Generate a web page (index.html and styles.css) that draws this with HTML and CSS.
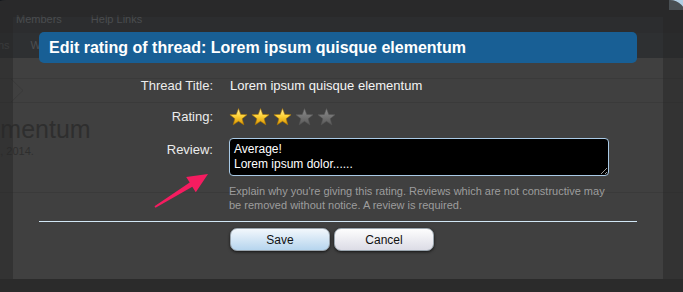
FILE: index.html
```html
<!DOCTYPE html>
<html lang="en">
<head>
    <meta charset="UTF-8">
    <meta name="viewport" content="width=device-width, initial-scale=1.0">
    <title>Edit rating of thread</title>
    <link rel="stylesheet" href="styles.css">
</head>
<body>

    <svg class="defs" width="0" height="0" aria-hidden="true">
        <defs>
            <linearGradient id="goldFill" x1="0" y1="0" x2="0" y2="1">
                <stop offset="0" stop-color="#fff4a8"/>
                <stop offset="0.45" stop-color="#ffd43a"/>
                <stop offset="1" stop-color="#d99400"/>
            </linearGradient>
            <linearGradient id="greyFill" x1="0" y1="0" x2="0" y2="1">
                <stop offset="0" stop-color="#8c8c8c"/>
                <stop offset="1" stop-color="#5a5a5a"/>
            </linearGradient>
            <symbol id="star" viewBox="0 0 20 20">
                <polygon points="10,0.6 12.35,6.76 19.04,7.06 13.8,11.24 15.58,17.69 10,14 4.42,17.69 6.2,11.24 0.96,7.06 7.65,6.76"/>
            </symbol>
        </defs>
    </svg>

    <!-- the forum page behind the dialog -->
    <div class="page">
        <header class="site-header">
            <nav class="tabs">
                <span>Members</span>
                <span>Help Links</span>
            </nav>
            <span class="header-cap"></span>
        </header>
        <div class="subnav">
            <span class="cut-left">Questions</span>
            <span>What's New?</span>
        </div>
        <main class="content">
            <div class="crumbs">
                <svg class="crumb-arrow" width="24" height="23" viewBox="0 0 24 23">
                    <polyline points="11,0 23,11.5 11,23" fill="none" stroke="#373737" stroke-width="1"/>
                </svg>
            </div>
            <h2 class="thread-heading">elementum</h2>
            <p class="thread-meta">Feb 21, 2014.</p>
            <div class="thread-rule"></div>
        </main>
        <footer class="site-footer"></footer>
    </div>

    <!-- rating dialog -->
    <div class="overlay-frame">
        <div class="dialog">
            <h1 class="dialog-title">Edit rating of thread: Lorem ipsum quisque elementum</h1>

            <form class="rating-form" id="ratingForm">
                <label class="row-label">Thread Title:</label>
                <div class="row-value">Lorem ipsum quisque elementum</div>

                <label class="row-label">Rating:</label>
                <div class="stars">
                    <svg class="star on"><use href="#star"/></svg>
                    <svg class="star on"><use href="#star"/></svg>
                    <svg class="star on"><use href="#star"/></svg>
                    <svg class="star"><use href="#star"/></svg>
                    <svg class="star"><use href="#star"/></svg>
                </div>

                <label class="row-label review-label" for="review">Review:</label>
                <div class="review-field">
                    <textarea id="review" class="review-box">Average!
Lorem ipsum dolor......</textarea>
                    <p class="hint">Explain why you're giving this rating. Reviews which are not constructive may be removed without notice. A review is required.</p>
                </div>
            </form>

            <div class="dialog-rule"></div>

            <div class="dialog-buttons">
                <button type="button" class="btn btn-save">Save</button>
                <button type="button" class="btn btn-cancel">Cancel</button>
            </div>
        </div>
    </div>

    <svg class="annotation-arrow" width="62" height="42" viewBox="0 0 62 42">
        <polygon points="58,4 36.2,7 39.7,12.5 4.5,36.2 5.5,37.8 42.3,16.7 45.8,22.2" fill="#f51c60"/>
    </svg>

</body>
</html>
```

FILE: styles.css
```css
body {
    margin: 0;
    width: 683px;
    height: 292px;
    overflow: hidden;
    position: relative;
    background-color: #1f1f1f;
    font-family: "Liberation Sans", Arial, sans-serif;
}

.defs {
    position: absolute;
}

/* page behind */
.site-header {
    display: flex;
    height: 33px;
    background-color: #15181c;
}

.tabs {
    display: flex;
    gap: 29px;
    padding: 12px 0 0 16px;
    font-size: 11px;
    line-height: 14px;
    color: #5f646b;
}

.header-cap {
    width: 14px;
    height: 10px;
    margin-left: auto;
    background-color: #b3cfe4;
}

.subnav {
    display: flex;
    gap: 21px;
    height: 25px;
    background-color: #1b2025;
    font-size: 11px;
    line-height: 25px;
    color: #666a6f;
}

.cut-left {
    margin-left: -40px;
}

.content {
    height: 221px;
    padding-top: 20px;
    box-sizing: border-box;
    background-color: #464646;
    overflow: hidden;
}

.crumbs {
    height: 23px;
    border-top: 1px solid #373737;
    border-bottom: 1px solid #373737;
}

.crumb-arrow {
    display: block;
}

.thread-heading {
    margin: 11px 0 0 -33px;
    font-size: 25px;
    line-height: 30px;
    font-weight: normal;
    color: #191919;
}

.thread-meta {
    margin: 0 0 0 -34px;
    font-size: 11px;
    line-height: 14px;
    color: #191919;
}

.thread-rule {
    margin-top: 34px;
    border-top: 1px solid #373737;
}

.site-footer {
    height: 13px;
}

/* dialog */
.overlay-frame {
    position: absolute;
    left: -10px;
    top: 0;
    right: -3px;
    bottom: -10px;
    border-style: solid;
    border-color: rgba(46, 46, 46, 0.8);
    border-width: 17px 23px 23px 23px;
    border-radius: 16px;
}

.dialog {
    height: 100%;
    box-sizing: border-box;
    padding: 15px 26px 0;
    background-color: rgba(60, 60, 60, 0.6);
}

.dialog-title {
    margin: 0;
    height: 31px;
    padding-left: 10px;
    border-radius: 5px;
    background-color: #185f95;
    color: #fff;
    font-size: 16px;
    line-height: 31px;
    font-weight: bold;
}

.rating-form {
    display: grid;
    grid-template-columns: 174px 1fr;
    column-gap: 16px;
    row-gap: 11px;
    margin-top: 13px;
    font-size: 13px;
    line-height: 20px;
}

.row-label {
    text-align: right;
    color: #ececec;
}

.row-value {
    color: #f4f4f4;
    padding-left: 1px;
}

.stars {
    display: flex;
    gap: 3px;
    height: 20px;
    align-items: center;
}

.star {
    width: 19px;
    height: 19px;
    fill: url(#greyFill);
    stroke: #565656;
    stroke-width: 0.6;
}

.star.on {
    fill: url(#goldFill);
    stroke: #b07800;
}

.review-label {
    padding-top: 2px;
}

.review-box {
    display: block;
    width: 380px;
    height: 38px;
    box-sizing: border-box;
    margin: 0;
    padding: 3px 4px;
    border: 1px solid #a9cae6;
    border-radius: 4px;
    background-color: #000;
    color: #fff;
    font-family: "Liberation Sans", Arial, sans-serif;
    font-size: 12px;
    line-height: 15px;
    overflow: hidden;
}

.hint {
    width: 380px;
    margin: 8px 0 0;
    font-size: 11px;
    line-height: 14px;
    color: #9d9d9d;
}

.dialog-rule {
    margin-top: 9px;
    border-top: 1px solid #d2e7f6;
}

.dialog-buttons {
    display: flex;
    gap: 4px;
    margin: 6px 0 0 191px;
}

.btn {
    width: 100px;
    height: 23px;
    padding: 0;
    border: 1px solid #9aa5ae;
    border-radius: 7px;
    font-family: "Liberation Sans", Arial, sans-serif;
    font-size: 12px;
    color: #111;
    box-shadow: 0 1px 3px rgba(0, 0, 0, 0.7);
    cursor: pointer;
}

.btn-save {
    background: linear-gradient(#f2f7fc, #b6d5ee);
}

.btn-cancel {
    background: linear-gradient(#fdfdfd, #dcdce6);
}

.annotation-arrow {
    position: absolute;
    left: 150px;
    top: 170px;
}
```
